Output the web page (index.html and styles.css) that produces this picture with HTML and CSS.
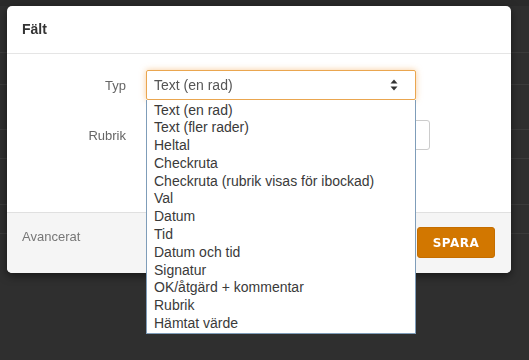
FILE: index.html
```html
<!DOCTYPE html>
<html lang="sv">
<head>
<meta charset="utf-8">
<title>Fält</title>
<link rel="stylesheet" href="styles.css">
</head>
<body>
<div class="backdrop">
  <div class="bg-top"></div>
  <div class="bg-row h47"></div>
  <div class="bg-row h31 left-only"></div>
  <div class="bg-row h44"></div>
  <div class="bg-row h28"></div>
  <div class="bg-row h45"></div>
  <div class="bg-row h28"></div>
</div>

<div class="modal">
  <div class="modal-header">
    <h4 class="modal-title">Fält</h4>
  </div>
  <div class="modal-body">
    <div class="form-grid">
      <label class="form-label">Typ</label>
      <div class="select-wrap">
        <div class="select">
          <span class="select-value">Text (en rad)</span>
          <svg class="select-arrows" width="8" height="12" viewBox="0 0 8 12">
            <path d="M4 0.5 L7.5 4.5 L0.5 4.5 Z" fill="#333"/>
            <path d="M4 11.5 L7.5 7.5 L0.5 7.5 Z" fill="#333"/>
          </svg>
        </div>
        <ul class="options">
          <li>Text (en rad)</li>
          <li>Text (fler rader)</li>
          <li>Heltal</li>
          <li>Checkruta</li>
          <li>Checkruta (rubrik visas för ibockad)</li>
          <li>Val</li>
          <li>Datum</li>
          <li>Tid</li>
          <li>Datum och tid</li>
          <li>Signatur</li>
          <li>OK/åtgärd + kommentar</li>
          <li>Rubrik</li>
          <li>Hämtat värde</li>
        </ul>
      </div>
      <label class="form-label">Rubrik</label>
      <div class="input"></div>
    </div>
  </div>
  <div class="modal-footer">
    <span class="advanced">Avancerat</span>
    <button class="btn-save">SPARA</button>
  </div>
</div>
</body>
</html>
```

FILE: styles.css
```css
html, body {
  margin: 0;
  padding: 0;
}
body {
  background: #2f2f2f;
  width: 529px;
  height: 360px;
  overflow: hidden;
  font-family: "Liberation Sans", Arial, sans-serif;
}

/* page behind the overlay */
.backdrop {
  display: flex;
  flex-direction: column;
}
.bg-top {
  height: 6px;
  background: #2a2a2a;
}
.bg-row {
  border-bottom: 1px solid #3b3b3b;
}
.h47 { height: 46px; }
.h31 { height: 31px; }
.h44 { height: 44px; }
.h28 { height: 28px; }
.h45 { height: 45px; }

/* modal */
.modal {
  position: fixed;
  left: 7px;
  top: 6px;
  width: 504px;
  background: #fff;
  border-radius: 5px;
  box-shadow: 0 3px 9px rgba(0, 0, 0, 0.5);
}
.modal-header {
  padding: 15px 15px;
  border-bottom: 1px solid #e5e5e5;
}
.modal-title {
  margin: 0;
  font-size: 14px;
  line-height: 17px;
  font-weight: bold;
  color: #333;
}
.modal-body {
  padding: 16px 15px 62px;
}
.form-grid {
  display: grid;
  grid-template-columns: 104px auto;
  column-gap: 20px;
  row-gap: 20px;
  align-items: center;
  justify-content: start;
}
.form-label {
  text-align: right;
  font-size: 13px;
  color: #666;
}
.select-wrap {
  position: relative;
  width: 270px;
}
.select {
  box-sizing: border-box;
  height: 30px;
  border: 1px solid #eaa64f;
  border-radius: 2px;
  box-shadow: 0 0 6px rgba(240, 160, 70, 0.55);
  display: flex;
  align-items: center;
  justify-content: space-between;
  padding: 0 17px 0 7px;
  font-size: 14px;
  color: #555;
}
.select-arrows {
  display: block;
}
.options {
  position: absolute;
  left: 0;
  top: 100%;
  z-index: 5;
  box-sizing: border-box;
  width: 270px;
  margin: 0;
  padding: 1.5px 0 0;
  list-style: none;
  background: #fff;
  border: 1px solid #7f9db9;
  border-top: none;
}
.options li {
  height: 17.8px;
  line-height: 17.8px;
  padding-left: 7px;
  font-size: 14px;
  color: #3a3a3a;
  white-space: nowrap;
}
.input {
  box-sizing: border-box;
  width: 284px;
  height: 30px;
  border: 1px solid #ccc;
  border-radius: 3px;
}

.modal-footer {
  background: #f5f5f5;
  border-top: 1px solid #e0e0e0;
  border-radius: 0 0 5px 5px;
  padding: 14px 16px 15px 15px;
  display: flex;
  justify-content: space-between;
  align-items: flex-start;
}
.advanced {
  padding-top: 2px;
  font-size: 13px;
  line-height: 16px;
  color: #777;
}
.btn-save {
  box-sizing: border-box;
  width: 78px;
  height: 31px;
  margin: 0;
  padding: 0;
  background: #d27700;
  border: 1px solid #c56e00;
  border-radius: 3px;
  color: #fff;
  font-family: "DejaVu Sans", sans-serif;
  font-weight: bold;
  font-size: 12px;
  letter-spacing: 0.5px;
}
```
